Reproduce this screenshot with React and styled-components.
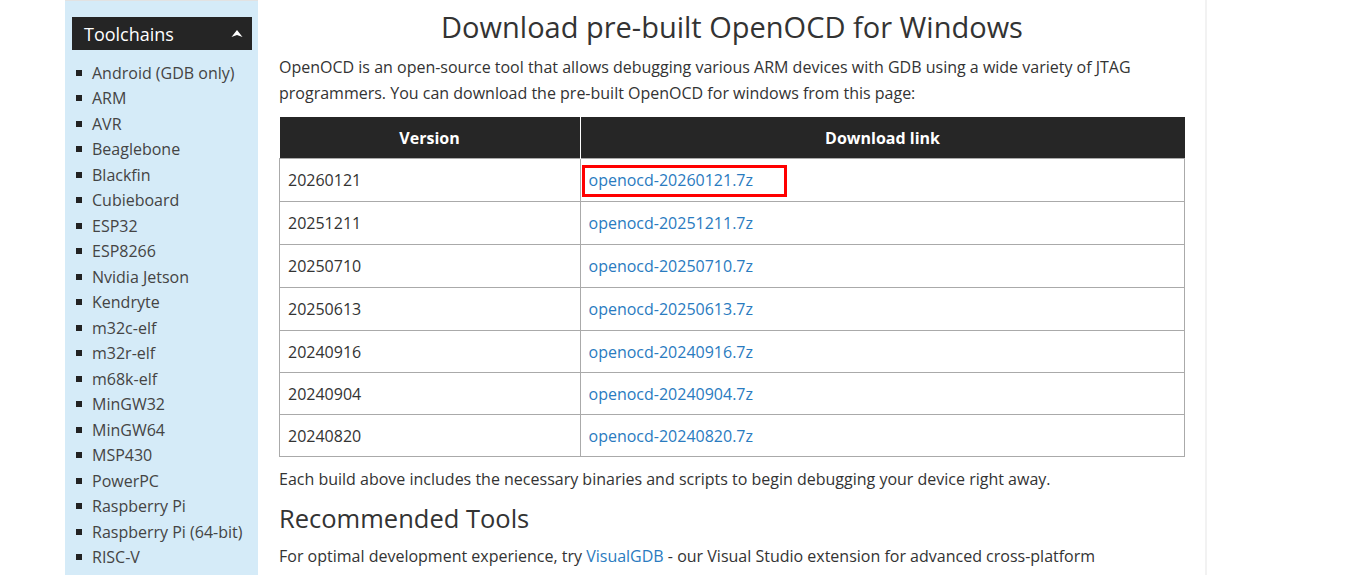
import React from 'react';
import styled, { createGlobalStyle } from 'styled-components';

const GlobalStyle = createGlobalStyle`
  html, body {
    margin: 0;
    padding: 0;
    background: #fff;
    font-family: 'Open Sans', 'Liberation Sans', sans-serif;
    color: #333;
  }
`;

const Page = styled.div`
  display: flex;
  width: 1142px;
  margin-left: 65px;
  height: 575px;
  overflow: hidden;
`;

const Sidebar = styled.aside`
  width: 193px;
  flex: none;
  background: #d5ebf8;
  border-top: 1px solid #e2e2e2;
  padding: 16px 6px 0 7px;
  box-sizing: border-box;
`;

const SideHeader = styled.div`
  height: 33px;
  background: #252525;
  color: #fff;
  font-size: 18px;
  display: flex;
  align-items: center;
  justify-content: space-between;
  padding: 0 9px 0 12px;
  line-height: 1;
`;

const SideList = styled.ul`
  list-style: none;
  margin: 10px 0 0;
  padding: 0;
`;

const SideItem = styled.li`
  display: flex;
  align-items: center;
  height: 25.5px;
  font-size: 16px;
  color: #444;
  padding-left: 4px;

  &::before {
    content: '';
    width: 6px;
    height: 6px;
    background: #222;
    margin-right: 10px;
    flex: none;
  }
`;

const Main = styled.main`
  flex: 1;
  padding: 0 20px 0 21px;
  border-right: 2px solid #f2f2f2;
`;

const Title = styled.h1`
  font-size: 29px;
  font-weight: 400;
  text-align: center;
  margin: 8px 0 0;
  line-height: 38px;
  color: #333;
`;

const Text = styled.p`
  font-size: 16px;
  line-height: 26px;
  margin: ${p => p.$m || '0'};
`;

const Link = styled.a`
  color: #2a7bbf;
  text-decoration: none;
`;

const Table = styled.table`
  width: 100%;
  border-collapse: collapse;
  margin-top: 11px;
  font-size: 16px;
`;

const Th = styled.th`
  background: #262626;
  color: #fff;
  font-weight: 700;
  height: 41px;
  padding: 0;
  text-align: center;
  border-left: 1px solid #fff;
  &:first-child { border-left: none; width: 300px; }
`;

const Td = styled.td`
  height: ${p => p.$h || 41}px;
  padding: 0 8px;
  border: 1px solid #aaa;
  position: relative;
  &:last-child { padding-left: 8px; }
`;

const Mark = styled.span`
  position: absolute;
  left: 1px;
  top: 6px;
  width: 205px;
  height: 32px;
  border: 3px solid #f00;
  box-sizing: border-box;
`;

const SubTitle = styled.h2`
  font-size: 25.5px;
  font-weight: 400;
  margin: 8px 0 0;
  line-height: 36px;
`;

const tools = [
  'Android (GDB only)', 'ARM', 'AVR', 'Beaglebone', 'Blackfin', 'Cubieboard', 'ESP32', 'ESP8266',
  'Nvidia Jetson', 'Kendryte', 'm32c-elf', 'm32r-elf', 'm68k-elf', 'MinGW32', 'MinGW64', 'MSP430',
  'PowerPC', 'Raspberry Pi', 'Raspberry Pi (64-bit)', 'RISC-V',
];

const builds = ['20260121', '20251211', '20250710', '20250613', '20240916', '20240904', '20240820'];

const Caret = () => (
  <svg width="12" height="9" viewBox="0 0 12 9">
    <path d="M0.5 8 L6 1 L11.5 8 L6 6 Z" fill="#fff" />
  </svg>
);

export default function App() {
  return (
    <>
      <GlobalStyle />
      <Page>
        <Sidebar>
          <SideHeader>
            <span>Toolchains</span>
            <Caret />
          </SideHeader>
          <SideList>
            {tools.map(t => <SideItem key={t}>{t}</SideItem>)}
          </SideList>
        </Sidebar>
        <Main>
          <Title>Download pre-built OpenOCD for Windows</Title>
          <Text $m="8px 0 0">
            OpenOCD is an open-source tool that allows debugging various ARM devices with GDB using a wide variety of JTAG
            programmers. You can download the pre-built OpenOCD for windows from this page:
          </Text>
          <Table>
            <thead>
              <tr><Th>Version</Th><Th>Download link</Th></tr>
            </thead>
            <tbody>
              {builds.map((b, i) => (
                <tr key={b}>
                  <Td $h={i < 4 ? 42 : 41}>{b}</Td>
                  <Td $h={i < 4 ? 42 : 41}>
                    {i === 0 && <Mark />}
                    <Link href="#">openocd-{b}.7z</Link>
                  </Td>
                </tr>
              ))}
            </tbody>
          </Table>
          <Text $m="9px 0 0">
            Each build above includes the necessary binaries and scripts to begin debugging your device right away.
          </Text>
          <SubTitle>Recommended Tools</SubTitle>
          <Text $m="7px 0 0">
            For optimal development experience, try <Link href="#">VisualGDB</Link> - our Visual Studio extension for advanced cross-platform
          </Text>
        </Main>
      </Page>
    </>
  );
}
